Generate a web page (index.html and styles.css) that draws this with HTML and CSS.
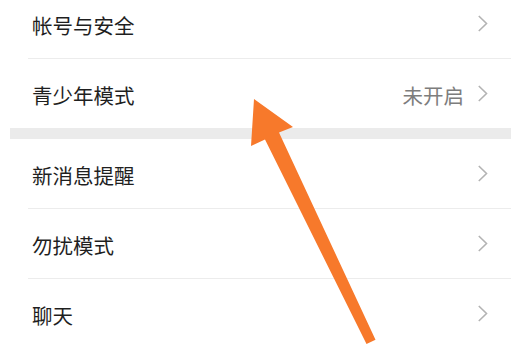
FILE: index.html
```html
<!DOCTYPE html>
<html lang="zh-CN">
<head>
  <meta charset="UTF-8">
  <title>设置</title>
  <link rel="stylesheet" href="styles.css">
</head>
<body>

  <div class="settings">
    <div class="group first">
      <div class="row">
        <span class="label">帐号与安全</span>
        <span class="chev"><svg width="10" height="17" viewBox="0 0 10 17"><path d="M0.8 1 L8.5 8.5 L0.8 16" fill="none" stroke="#b3b3b3" stroke-width="1.6"/></svg></span>
      </div>
      <div class="divider"></div>
      <div class="row">
        <span class="label">青少年模式</span>
        <span class="value">未开启</span>
        <span class="chev"><svg width="10" height="17" viewBox="0 0 10 17"><path d="M0.8 1 L8.5 8.5 L0.8 16" fill="none" stroke="#b3b3b3" stroke-width="1.6"/></svg></span>
      </div>
    </div>

    <div class="gap"></div>

    <div class="group">
      <div class="row">
        <span class="label">新消息提醒</span>
        <span class="chev"><svg width="10" height="17" viewBox="0 0 10 17"><path d="M0.8 1 L8.5 8.5 L0.8 16" fill="none" stroke="#b3b3b3" stroke-width="1.6"/></svg></span>
      </div>
      <div class="divider"></div>
      <div class="row">
        <span class="label">勿扰模式</span>
        <span class="chev"><svg width="10" height="17" viewBox="0 0 10 17"><path d="M0.8 1 L8.5 8.5 L0.8 16" fill="none" stroke="#b3b3b3" stroke-width="1.6"/></svg></span>
      </div>
      <div class="divider"></div>
      <div class="row">
        <span class="label">聊天</span>
        <span class="chev"><svg width="10" height="17" viewBox="0 0 10 17"><path d="M0.8 1 L8.5 8.5 L0.8 16" fill="none" stroke="#b3b3b3" stroke-width="1.6"/></svg></span>
      </div>
    </div>
  </div>

  <!-- annotation arrow drawn over the list -->
  <svg class="arrow" width="511" height="345" viewBox="0 0 511 345">
    <polygon points="254,99 251,146 265,139.5 366.5,344 375.5,339.8 279,132.5 293,127" fill="#f7792b"/>
  </svg>

</body>
</html>
```

FILE: styles.css
```css
body {
  margin: 0;
  background: #fff;
  font-family: "Noto Sans CJK SC", "Noto Sans", sans-serif;
  color: #1f1f1f;
  overflow: hidden;
  position: relative;
  height: 345px;
}

.settings {
  width: 511px;
}

.group.first {
  margin-top: -11px;
}

.row {
  display: flex;
  align-items: center;
  height: 69px;
  padding: 0 23px 0 32px;
}

.label {
  flex: 1;
  font-size: 20.5px;
  padding-top: 3px;
}

.value {
  font-size: 20.5px;
  color: #7d7d7d;
  margin-right: 14px;
  padding-top: 3px;
}

.chev {
  display: flex;
  width: 10px;
  height: 17px;
}

.divider {
  height: 1px;
  margin-left: 28px;
  background: #ececec;
}

.gap {
  height: 11px;
  margin-left: 10px;
  background: #ebebeb;
}

.arrow {
  position: absolute;
  left: 0;
  top: 0;
}
```
